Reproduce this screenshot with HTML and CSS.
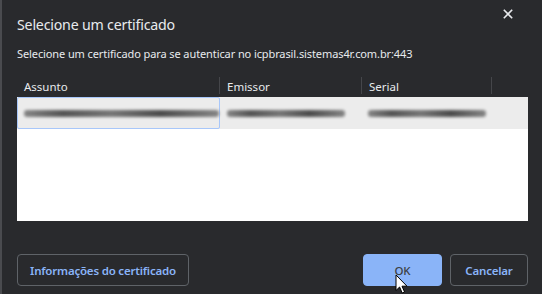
FILE: index.html
```html
<!DOCTYPE html>
<html lang="pt-BR">
<head>
<meta charset="utf-8">
<title>Selecione um certificado</title>
<link rel="stylesheet" href="styles.css">
</head>
<body>
<div class="dialog">
  <div class="head">
    <h1 class="title">Selecione um certificado</h1>
    <button class="close" aria-label="Fechar">
      <svg width="10" height="10" viewBox="0 0 10 10"><path d="M0.8 0.8L9.2 9.2M9.2 0.8L0.8 9.2" stroke="#e8eaed" stroke-width="1.6" fill="none"/></svg>
    </button>
  </div>
  <p class="sub">Selecione um certificado para se autenticar no icpbrasil.sistemas4r.com.br:443</p>
  <div class="table">
    <div class="thead">
      <div class="th c1">Assunto</div>
      <div class="th c2">Emissor</div>
      <div class="th c3">Serial</div>
      <div class="th c4"></div>
    </div>
    <div class="row">
      <div class="td c1 sel"><span class="blur w1"></span></div>
      <div class="td c2"><span class="blur w2"></span></div>
      <div class="td c3"><span class="blur w3"></span></div>
      <div class="td c4"></div>
    </div>
    <div class="empty"></div>
  </div>
  <div class="foot">
    <button class="btn info">Informações do certificado</button>
    <div class="right">
      <button class="btn primary">OK</button>
      <button class="btn cancel">Cancelar</button>
    </div>
  </div>
  <svg class="cursor" width="14" height="21" viewBox="0 0 14 21"><path d="M1 1L1 16.5L4.6 13L7.2 19L9.6 18L7 12.2L12 12.2Z" fill="#fff" stroke="#000" stroke-width="1" stroke-linejoin="round"/></svg>
</div>
</body>
</html>
```
FILE: styles.css
```css
* { box-sizing: border-box; }
html, body { margin: 0; padding: 0; }
body {
  width: 542px;
  height: 294px;
  background: #292a2d;
  font-family: "Noto Sans", "Open Sans", sans-serif;
  color: #e8eaed;
  overflow: hidden;
}
.dialog {
  position: relative;
  height: 294px;
  border-left: 2px solid #4a4b4f;
  padding: 0 14px 8px 15px;
  display: flex;
  flex-direction: column;
}
.head {
  display: flex;
  justify-content: space-between;
  align-items: flex-start;
  height: 44px;
}
.title {
  margin: 15px 0 0 0;
  font-size: 14.2px;
  font-weight: 400;
  line-height: 20px;
  letter-spacing: -0.2px;
  color: #e8eaed;
}
.close {
  margin: 9px 15px 0 0;
  padding: 0;
  border: 0;
  background: none;
  width: 10px;
  height: 10px;
  display: block;
  line-height: 0;
}
.sub {
  margin: 0;
  font-size: 11px;
  line-height: 20px;
  letter-spacing: -0.1px;
  color: #e8eaed;
}
.table {
  margin-top: 13px;
  width: 511px;
  display: flex;
  flex-direction: column;
}
.thead {
  display: flex;
  height: 20px;
  align-items: stretch;
}
.th {
  font-size: 11.5px;
  padding-left: 7px;
  margin: 0;
  color: #e8eaed;
}
.thead .th { border-right: 1px solid #45464a; height: 17px; line-height: 19px; }
.c1 { width: 203px; }
.c2 { width: 142px; }
.c3 { width: 130px; }
.c4 { flex: 1; }
.thead .c4 { border-right: 0; }
.row {
  display: flex;
  height: 32px;
  background: #ececec;
}
.td {
  position: relative;
  display: flex;
  align-items: center;
  padding-left: 7px;
}
.td.sel {
  border: 1px solid #a8c7fa;
  border-radius: 2px;
  padding-left: 6px;
}
.blur {
  display: block;
  height: 7px;
  background: linear-gradient(90deg, #7a7a7a, #444 20%, #6a6a6a 45%, #3a3a3a 70%, #7a7a7a);
  filter: blur(1.8px);
  border-radius: 3px;
  opacity: 0.9;
}
.w1 { width: 200px; }
.w2 { width: 118px; }
.w3 { width: 118px; margin-left: -1px; }
.empty {
  height: 92px;
  background: #ffffff;
}
.foot {
  margin-top: auto;
  display: flex;
  justify-content: space-between;
  align-items: center;
}
.right { display: flex; gap: 8px; }
.btn {
  height: 32px;
  padding: 0;
  border: 1px solid #5f6368;
  border-radius: 4px;
  background: transparent;
  color: #8ab4f8;
  font-family: "Noto Sans", "Open Sans", sans-serif;
  font-size: 11.5px;
  font-weight: 600;
  white-space: nowrap;
  letter-spacing: -0.2px;
}
.info { width: 172px; }
.primary {
  width: 79px;
  background: #8ab4f8;
  border-color: #8ab4f8;
  color: #3c4043;
  font-weight: 500;
}
.cancel { width: 78px; }
.cursor {
  position: absolute;
  left: 393px;
  top: 274px;
}
```
